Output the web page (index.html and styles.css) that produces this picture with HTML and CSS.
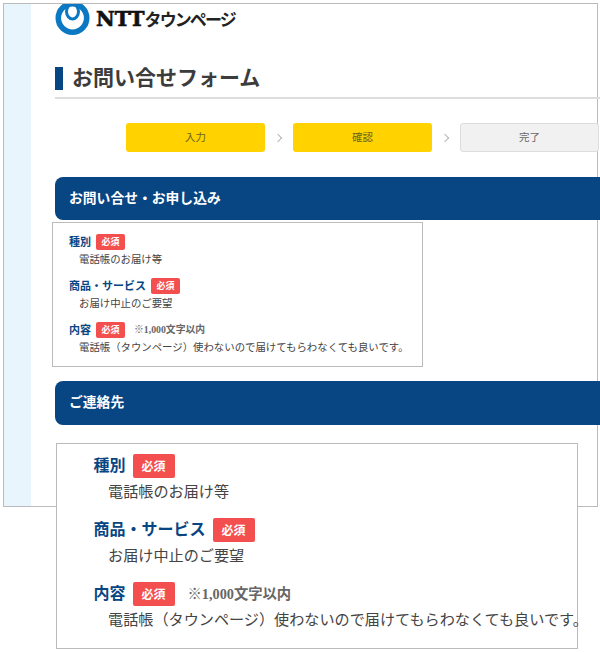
FILE: index.html
```html
<!DOCTYPE html>
<html lang="ja">
<head>
<meta charset="utf-8">
<title>お問い合せフォーム</title>
<link rel="stylesheet" href="styles.css">
</head>
<body>
<div class="frame">
  <div class="side"></div>
  <main class="content">
    <div class="logo">
      <svg class="logo-mark" width="36" height="36" viewBox="0 0 36 36" aria-hidden="true">
        <circle cx="17.5" cy="18" r="14.2" fill="none" stroke="#0a78c2" stroke-width="5.6"/>
        <ellipse cx="17.5" cy="11.5" rx="6" ry="7.5" fill="none" stroke="#0a78c2" stroke-width="3"/>
      </svg>
      <span class="logo-ntt">NTT</span><span class="logo-kana">タウンページ</span>
    </div>
    <h1 class="title">お問い合せフォーム</h1>
    <ol class="steps">
      <li class="step step-on">入力</li>
      <li class="chev"></li>
      <li class="step step-on">確認</li>
      <li class="chev"></li>
      <li class="step step-off">完了</li>
    </ol>
    <h2 class="bar">お問い合せ・お申し込み</h2>
    <section class="panel-small">
      <div class="row">
        <div class="label"><b>種別</b><span class="badge">必須</span></div>
        <p class="value">電話帳のお届け等</p>
      </div>
      <div class="row">
        <div class="label"><b>商品・サービス</b><span class="badge">必須</span></div>
        <p class="value">お届け中止のご要望</p>
      </div>
      <div class="row">
        <div class="label"><b>内容</b><span class="badge">必須</span><span class="note">※1,000文字以内</span></div>
        <p class="value">電話帳（タウンページ）使わないので届けてもらわなくても良いです。</p>
      </div>
    </section>
    <h2 class="bar bar-contact">ご連絡先</h2>
  </main>
</div>
<section class="panel-large">
  <div class="row">
    <div class="label"><b>種別</b><span class="badge">必須</span></div>
    <p class="value">電話帳のお届け等</p>
  </div>
  <div class="row">
    <div class="label"><b>商品・サービス</b><span class="badge">必須</span></div>
    <p class="value">お届け中止のご要望</p>
  </div>
  <div class="row">
    <div class="label"><b>内容</b><span class="badge">必須</span><span class="note">※1,000文字以内</span></div>
    <p class="value">電話帳（タウンページ）使わないので届けてもらわなくても良いです。</p>
  </div>
</section>
</body>
</html>
```
FILE: styles.css
```css
html, body {
  margin: 0;
  padding: 0;
}
body {
  position: relative;
  width: 600px;
  height: 653px;
  overflow: hidden;
  background: #fff;
  font-family: "Noto Sans CJK JP", "Liberation Sans", sans-serif;
  color: #444;
}
.frame {
  box-sizing: border-box;
  display: flex;
  width: 595px;
  height: 504px;
  margin: 3px 0 0 3px;
  border: 1px solid #bbb;
}
.side {
  flex: 0 0 27px;
  background: #e9f5fd;
}
.content {
  flex: 0 0 545px;
  margin-left: 24px;
}
.logo {
  display: flex;
  align-items: center;
  height: 32px;
  overflow: hidden;
}
.logo-mark {
  flex: none;
  margin-top: -4px;
}
.logo-ntt {
  margin-left: 5px;
  font: 700 20.5px/30px "DejaVu Serif", serif;
  color: #111;
  -webkit-text-stroke: 0.6px #111;
  padding-bottom: 2px;
}
.logo-kana {
  font-size: 17px;
  font-weight: 700;
  line-height: 30px;
  padding-bottom: 2px;
  color: #222;
  letter-spacing: -1.9px;
}
.title {
  box-sizing: content-box;
  height: 23px;
  margin: 31px 0 0;
  padding: 0 0 7px 17px;
  border-bottom: 2px solid #ddd;
  background: linear-gradient(#084583, #084583) 0 0 / 8px 23px no-repeat;
  font-size: 21px;
  font-weight: 700;
  line-height: 19px;
  color: #3c3c3c;
}
.steps {
  display: flex;
  align-items: center;
  margin: 24px 0 0 71px;
  padding: 0;
  list-style: none;
  width: 480px;
}
.step {
  box-sizing: border-box;
  flex: 0 0 139px;
  height: 29px;
  border-radius: 3px;
  font-size: 10.5px;
  line-height: 28px;
  text-align: center;
  color: #666;
}
.step-on {
  background: #ffd200;
  color: #6b6420;
}
.step-off {
  background: #f1f1f1;
  border: 1px solid #ddd;
  line-height: 26px;
}
.chev {
  display: flex;
  flex: 0 0 28px;
  justify-content: center;
}
.chev::before {
  content: "";
  width: 5px;
  height: 5px;
  margin-left: -3px;
  border-top: 1.5px solid #b5b5b5;
  border-right: 1.5px solid #b5b5b5;
  transform: rotate(45deg);
}
.bar {
  box-sizing: border-box;
  margin: 25px 0 0;
  width: 545px;
  height: 43px;
  padding-left: 14px;
  border-radius: 8px 0 0 8px;
  background: #084583;
  color: #fff;
  font-size: 13.8px;
  font-weight: 700;
  line-height: 41px;
}
.bar-contact {
  margin-top: 14px;
  height: 44px;
}
.panel-small {
  box-sizing: border-box;
  width: 371px;
  height: 145px;
  margin: 2px 0 0 -3px;
  padding: 11px 0 0 16px;
  border: 1px solid #bbb;
  background: #fff;
  --label: 11px;
  --label-lift: 2px;
  --value: 10.4px;
  --note: 9.8px;
  --badge-w: 29px;
  --badge-h: 16px;
  --badge-font: 9px;
  --gap: 5px;
  --indent: 10px;
  --value-h: 18px;
  --row-gap: 10px;
  --note-gap: 9px;
}
.panel-large {
  box-sizing: border-box;
  position: absolute;
  left: 56px;
  top: 443px;
  width: 522px;
  height: 206px;
  padding: 10px 0 0 36.5px;
  border: 1px solid #bbb;
  background: #fff;
  --label: 16px;
  --label-lift: 4px;
  --value: 15.13px;
  --note: 14.3px;
  --badge-w: 42px;
  --badge-h: 24px;
  --badge-font: 12px;
  --gap: 7px;
  --indent: 14.5px;
  --value-h: 25px;
  --row-gap: 15px;
  --note-gap: 13px;
  white-space: nowrap;
}
.row {
  margin-bottom: var(--row-gap);
}
.label {
  display: flex;
  align-items: center;
  height: var(--badge-h);
  color: #084583;
  font-size: var(--label);
  line-height: var(--badge-h);
}
.label b {
  margin-bottom: var(--label-lift);
}
.badge {
  flex: 0 0 var(--badge-w);
  height: var(--badge-h);
  margin-left: var(--gap);
  border-radius: 2px;
  background: #f44f4f;
  color: #fff;
  font-size: var(--badge-font);
  font-weight: 700;
  line-height: var(--badge-h);
  text-align: center;
}
.note {
  margin-left: var(--note-gap);
  font-family: "Liberation Serif", "Noto Sans CJK JP", serif;
  font-size: var(--note);
  font-weight: 700;
  color: #666;
}
.value {
  margin: 0 0 0 var(--indent);
  height: var(--value-h);
  font-size: var(--value);
  line-height: var(--value-h);
  color: #444;
  white-space: nowrap;
}
```
